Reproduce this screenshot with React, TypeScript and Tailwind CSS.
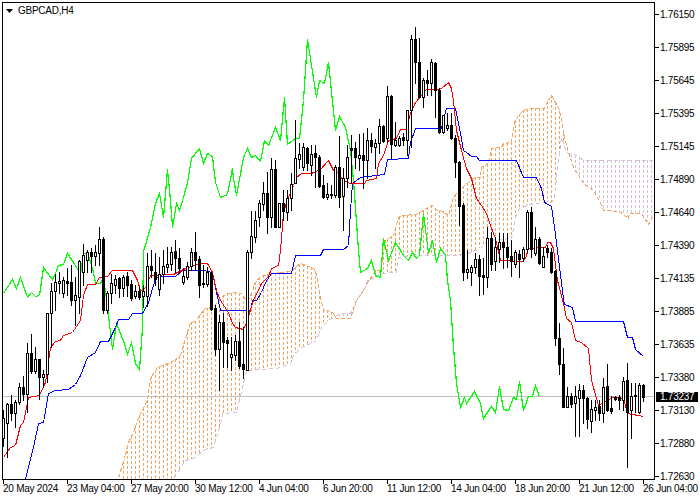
import React from "react";

type Pt = [number, number];
const candles: number[][] = [
[410,418,438,446,0],[403,404,423,457,0],[395,404,413,420,1],[400,402,413,427,0],[383,387,402,404,0],
[376,387,394,400,1],[343,353,394,412,0],[334,353,371,373,1],[347,359,371,373,0],[359,359,377,399,1],
[370,374,377,387,0],[313,313,374,382,0],[283,291,313,347,0],[274,282,291,310,0],[272,281,283,293,0],
[277,280,293,297,0],[268,281,283,295,1],[265,282,300,305,1],[277,295,300,325,0],[260,261,297,313,0],
[244,255,272,285,0],[250,252,260,272,0],[248,252,256,272,1],[245,252,256,265,0],[227,239,253,265,0],
[237,239,310,313,1],[291,293,310,313,0],[274,283,293,303,0],[275,279,285,293,0],[277,278,288,297,1],
[275,277,288,296,0],[272,276,285,296,1],[280,284,298,300,1],[285,291,296,298,0],[287,291,297,299,1],
[285,291,296,307,0],[253,266,296,306,0],[250,266,270,277,1],[253,272,279,285,1],[257,274,289,295,0],
[250,266,274,283,0],[247,264,267,272,0],[247,252,264,270,0],[240,251,258,272,1],[248,258,268,273,1],
[268,276,282,284,0],[262,266,277,279,0],[248,252,266,270,0],[232,252,260,270,1],[256,259,285,297,1],
[265,283,284,287,0],[267,272,284,286,0],[272,273,309,310,1],[305,308,349,355,1],[315,322,349,390,0],
[313,322,342,367,1],[337,340,343,367,1],[337,354,357,370,0],[335,341,355,360,0],[322,341,366,368,1],
[327,364,369,378,1],[250,252,370,370,0],[211,236,252,258,0],[211,220,237,242,0],[200,203,217,226,0],
[182,193,204,210,0],[172,193,217,233,1],[158,169,217,227,0],[160,169,227,227,1],[203,203,227,227,0],
[190,203,211,220,1],[190,198,212,220,0],[173,184,198,210,0],[120,158,183,183,0],[143,154,159,168,0],
[143,147,167,170,0],[147,148,163,170,1],[145,154,165,175,0],[145,153,157,187,1],[155,157,186,187,1],
[175,185,197,198,1],[183,194,197,199,0],[185,194,195,198,0],[165,167,195,197,0],[136,167,197,207,1],
[168,178,196,230,0],[145,157,178,187,0],[135,148,150,183,1],[142,148,157,168,1],[134,155,158,170,0],
[133,155,160,188,1],[128,140,160,178,0],[133,140,146,152,1],[139,143,147,168,0],[119,126,143,153,0],
[125,126,141,142,1],[86,96,138,142,0],[95,96,144,158,1],[122,140,145,146,0],[136,138,145,146,0],
[133,137,140,145,1],[110,110,140,155,0],[35,39,110,147,0],[27,39,62,83,1],[38,62,97,97,1],
[78,80,97,107,0],[70,80,83,95,1],[59,62,83,95,0],[62,63,90,117,1],[88,90,132,133,1],
[115,115,132,133,0],[113,125,128,130,0],[113,125,138,139,1],[135,138,162,177,1],[161,162,206,225,1],
[203,205,272,280,1],[250,269,272,278,0],[265,267,272,285,0],[253,259,267,273,0],[255,259,276,295,1],
[258,275,277,294,1],[227,238,277,287,0],[232,238,264,270,1],[237,247,261,270,0],[233,242,249,262,0],
[233,242,247,268,1],[233,247,257,267,1],[240,256,261,276,1],[250,252,264,267,0],[250,254,259,277,1],
[247,249,258,261,0],[210,212,249,252,0],[207,212,249,257,1],[227,239,253,255,0],[237,239,263,264,1],
[247,256,267,267,0],[245,248,252,257,1],[248,252,272,273,1],[270,271,338,345,1],[323,338,364,374,1],
[348,364,407,407,1],[387,396,407,407,0],[393,396,404,407,1],[386,396,403,436,0],[384,390,398,436,0],
[385,390,398,423,1],[397,398,419,428,1],[400,409,421,432,0],[400,407,410,420,0],[400,406,413,420,1],
[378,387,413,422,0],[364,386,410,411,1],[396,408,411,413,1],[396,397,399,400,1],[395,397,400,409,1],
[377,381,400,410,0],[363,380,412,467,1],[383,396,410,438,0],[383,395,396,412,1],[383,385,412,413,0],
[384,385,397,401,1],
];

const green: Pt[] = [[3,293],[12,279],[16,288],[20,277],[27,297],[31,292],[35,296],[39,295],[43,267],[52,279],[55,273],[58,265],[63,264],[67,253],[73,262],[80,273],[83,253],[85,253],[88,255],[93,272],[95,283],[100,283],[103,277],[107,307],[112,349],[116,323],[124,343],[127,354],[131,342],[135,363],[139,369],[142,327],[143,250],[144,248],[150,227],[155,203],[159,193],[163,217],[167,169],[170,200],[172,227],[176,203],[179,210],[183,197],[187,182],[191,158],[199,148],[203,163],[207,153],[212,156],[215,182],[220,197],[227,194],[232,168],[233,178],[236,195],[243,157],[247,148],[251,157],[255,155],[260,161],[264,140],[268,145],[275,127],[280,140],[284,97],[287,144],[295,138],[299,138],[303,100],[307,39],[316,97],[319,80],[324,83],[328,62],[335,130],[339,116],[345,127],[350,150],[353,180],[358,250],[360,272],[367,268],[371,260],[375,275],[380,277],[383,238],[388,260],[395,242],[403,255],[408,260],[412,252],[416,258],[419,255],[423,213],[428,253],[432,240],[436,262],[440,248],[445,255],[447,280],[450,300],[453,347],[456,383],[460,407],[464,397],[466,403],[474,391],[480,403],[483,418],[491,406],[495,412],[499,386],[503,409],[508,410],[513,397],[516,399],[519,381],[523,410],[528,396],[532,396],[535,385],[539,396]];

const red: Pt[] = [[3,457],[10,447],[15,445],[20,425],[23,422],[28,397],[39,395],[45,382],[50,347],[55,341],[60,340],[63,335],[72,332],[80,320],[83,295],[87,284],[95,284],[99,277],[107,276],[112,270],[132,270],[137,280],[140,290],[145,288],[150,275],[173,274],[177,272],[185,268],[200,263],[207,263],[212,272],[216,290],[220,300],[228,312],[232,323],[235,327],[243,329],[246,322],[253,300],[261,283],[268,276],[271,268],[278,265],[280,250],[283,213],[286,202],[293,185],[296,177],[301,173],[311,173],[320,169],[328,160],[333,170],[338,173],[343,180],[350,183],[364,183],[366,180],[376,178],[378,163],[383,155],[388,140],[396,138],[400,129],[406,129],[410,113],[415,102],[426,89],[436,89],[441,88],[448,82],[451,88],[453,100],[456,130],[461,150],[466,168],[471,178],[476,198],[481,205],[486,213],[490,225],[495,238],[500,260],[522,261],[525,258],[528,248],[545,247],[547,242],[550,242],[553,248],[557,280],[563,303],[566,318],[571,322],[575,340],[581,342],[588,348],[591,380],[598,405],[606,400],[613,397],[623,398],[627,413],[643,416]];

const blue: Pt[] = [[25,479],[33,447],[38,423],[43,422],[48,393],[55,390],[68,389],[75,384],[80,375],[87,357],[95,352],[100,341],[108,341],[115,327],[118,319],[128,319],[132,313],[142,313],[148,302],[155,278],[160,276],[175,276],[182,270],[203,270],[212,272],[215,287],[220,310],[250,310],[252,300],[256,300],[261,292],[265,282],[271,273],[291,273],[295,255],[320,255],[323,249],[343,249],[348,245],[350,210],[352,183],[360,177],[376,175],[384,174],[387,159],[408,158],[410,142],[415,128],[441,128],[446,108],[455,108],[460,133],[463,150],[466,152],[471,156],[476,156],[479,160],[516,160],[523,177],[536,177],[541,188],[544,202],[551,206],[554,227],[557,250],[563,298],[564,304],[572,307],[575,321],[623,321],[627,337],[632,337],[635,349],[643,356]];

const spanA: Pt[] = [[118,477],[124,458],[128,442],[133,432],[138,417],[147,400],[150,378],[157,367],[170,362],[177,358],[180,355],[185,338],[190,322],[195,321],[199,315],[205,308],[213,307],[218,300],[220,297],[227,293],[236,292],[241,293],[245,299],[248,300],[253,288],[254,283],[260,276],[271,273],[283,272],[291,270],[300,263],[313,268],[316,273],[320,297],[323,310],[328,310],[333,313],[336,318],[350,318],[356,300],[365,287],[367,282],[375,270],[380,270],[385,240],[388,238],[393,235],[398,217],[402,215],[415,214],[420,212],[425,208],[432,205],[437,210],[443,211],[448,215],[453,197],[458,190],[474,177],[480,177],[481,167],[488,163],[491,148],[501,147],[503,143],[511,142],[514,122],[518,115],[523,110],[529,108],[544,108],[546,103],[551,95],[558,107],[561,118],[563,133],[568,152],[573,167],[583,183],[593,190],[599,200],[603,210],[619,211],[628,218],[629,213],[641,213],[648,224],[652,217]];

const spanB: Pt[] = [[118,520],[172,480],[185,460],[193,458],[203,450],[213,447],[222,417],[222,413],[236,412],[243,383],[246,370],[276,368],[291,363],[293,355],[301,347],[313,342],[316,340],[321,327],[328,320],[340,313],[350,313],[356,300],[365,287],[367,280],[373,278],[380,273],[396,272],[398,257],[413,255],[458,255],[470,252],[480,248],[488,240],[511,238],[516,213],[519,208],[533,203],[551,202],[554,198],[556,177],[561,137],[566,152],[576,155],[583,160],[652,160]];

const interp = (line: Pt[], x: number): number => {
  for (let k = 1; k < line.length; k++) {
    if (x <= line[k][0]) {
      const [x0, y0] = line[k - 1];
      const [x1, y1] = line[k];
      return y0 + ((y1 - y0) * (x - x0)) / Math.max(x1 - x0, 1);
    }
  }
  return line[line.length - 1][1];
};

const pts = (line: Pt[]) => line.map(([x, y]) => `${x + 0.5},${y + 0.5}`).join(" ");

let hatchOrange = "";
let hatchThistle = "";
for (let x = 119; x <= 651; x += 4) {
  const a = Math.round(interp(spanA, x));
  const b = Math.round(interp(spanB, x));
  const seg = `M${x + 0.5} ${Math.min(a, b)}V${Math.max(a, b)}`;
  if (a <= b) hatchOrange += seg;
  else hatchThistle += seg;
}

const prices = ["1.76150","1.75895","1.75645","1.75395","1.75145","1.74890","1.74640","1.74390","1.74135","1.73885","1.73635","1.73380","1.73130","1.72880","1.72630"];
const times = ["20 May 2024","23 May 04:00","27 May 20:00","30 May 12:00","4 Jun 04:00","6 Jun 20:00","11 Jun 12:00","14 Jun 04:00","18 Jun 20:00","21 Jun 12:00","26 Jun 04:00"];

export default function App() {
  return (
    <div className="relative w-[700px] h-[500px] overflow-hidden bg-white text-black font-['Liberation_Sans',sans-serif] text-[10px] tracking-[-0.25px]">
      <div className="flex h-[480px]">
        <div className="relative mt-[2px] ml-[2px] w-[653px] h-[478px] border border-black">
          <svg width={651} height={476} viewBox="3 3 651 476" className="block" shapeRendering="crispEdges">
            <path d={hatchOrange} fill="none" stroke="#F4A460" strokeDasharray="3 2" />
            <path d={hatchThistle} fill="none" stroke="#D8BFD8" strokeDasharray="3 2" />
            <polyline points={pts(spanB)} fill="none" stroke="#D8BFD8" strokeDasharray="4 3" />
            <polyline points={pts(spanA)} fill="none" stroke="#F4A460" strokeDasharray="4 2" />
            <rect x={3} y={396} width={651} height={1} fill="#C0C0C0" />
            <polyline points={pts(green)} fill="none" stroke="#00FF00" strokeWidth={1.2} />
            <polyline points={pts(blue)} fill="none" stroke="#0000FF" />
            <polyline points={pts(red)} fill="none" stroke="#FF0000" />
            {candles.map(([hi, top, bot, lo, filled], i) => {
              const x = 3 + 4 * i;
              return (
                <g key={i}>
                  <rect x={x} y={hi} width={1} height={lo - hi + 1} fill="#000" />
                  <rect x={x - 1} y={top} width={3} height={bot - top + 1} fill="#000" />
                  {!filled && bot - top > 1 && (
                    <rect x={x} y={top + 1} width={1} height={bot - top - 1} fill="#fff" />
                  )}
                </g>
              );
            })}
          </svg>
          <div className="absolute left-[3px] top-[2px] flex items-center gap-[5px] h-[12px]">
            <svg width={7} height={4} viewBox="0 0 7 4" className="block">
              <polygon points="0,0 7,0 3.5,4" fill="#000" />
            </svg>
            <span className="leading-none">GBPCAD,H4</span>
          </div>
        </div>
        <div className="flex flex-col -mt-[2px] ml-[-1px]">
          {prices.map((p) => (
            <div key={p} className="flex items-center h-[33px] shrink-0">
              <div className="w-[5px] h-px bg-black" />
              <span className="ml-[1px] leading-none">{p}</span>
            </div>
          ))}
        </div>
      </div>
      <div className="flex pl-[3px]">
        {times.map((t) => (
          <div key={t} className="w-[64px] shrink-0 whitespace-nowrap">
            <div className="w-px h-[4px] bg-black" />
            <div className="leading-none">{t}</div>
          </div>
        ))}
      </div>
      <div className="absolute left-[656px] top-[392px] w-[42px] h-[10px] bg-black text-white leading-[10px] pl-[4px]">
        1.73237
      </div>
    </div>
  );
}
